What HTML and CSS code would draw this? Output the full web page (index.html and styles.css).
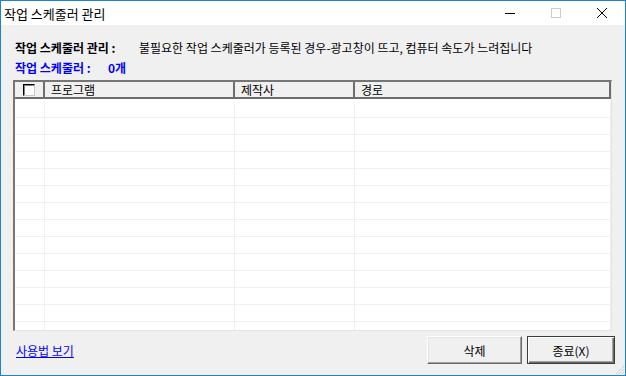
FILE: index.html
```html
<!DOCTYPE html>
<html>
<head>
    <title>작업 스케줄러 관리</title>
    <link rel="stylesheet" href="styles.css">
</head>
<body>
    <div class="window">
        <div class="titlebar">
            <span class="title">작업 스케줄러 관리</span>
            <div class="caption-buttons">
                <div class="caption-btn">
                    <svg width="10" height="10" viewBox="0 0 10 10"><path d="M0 5.5H10" stroke="#000" stroke-width="1"/></svg>
                </div>
                <div class="caption-btn">
                    <svg width="10" height="10" viewBox="0 0 10 10"><rect x="0.5" y="0.5" width="9" height="9" fill="none" stroke="#cccccc" stroke-width="1"/></svg>
                </div>
                <div class="caption-btn">
                    <svg width="10" height="10" viewBox="0 0 10 10"><path d="M0 0L10 10M10 0L0 10" stroke="#000" stroke-width="1"/></svg>
                </div>
            </div>
        </div>

        <div class="client">
            <div class="info">
                <div class="info-row">
                    <span class="info-label">작업 스케줄러 관리 :</span>
                    <span>불필요한 작업 스케줄러가 등록된 경우-광고창이 뜨고, 컴퓨터 속도가 느려집니다</span>
                </div>
                <div class="info-row count">
                    <span class="count-label">작업 스케줄러 :</span>
                    <span id="taskCount">0개</span>
                </div>
            </div>

            <div class="list">
                <div class="list-head">
                    <div class="head-cell check-cell"><span class="checkbox"></span></div>
                    <div class="head-cell">프로그램</div>
                    <div class="head-cell">제작사</div>
                    <div class="head-cell">경로</div>
                </div>
                <div class="list-body" id="listBody"></div>
            </div>

            <div class="footer">
                <a class="help-link" href="#">사용법 보기</a>
                <div class="actions">
                    <button class="btn btn-delete">삭제</button>
                    <button class="btn btn-close btn-default">종료(X)</button>
                </div>
            </div>
        </div>

        <svg class="grip" width="10" height="10" viewBox="0 0 10 10">
            <path d="M9 1L1 9M9 4L4 9M9 7L7 9" stroke="#b8b8b8" stroke-width="1" stroke-dasharray="1 1"/>
        </svg>
    </div>

    <script>
        const listBody = document.getElementById('listBody');
        const totalRows = 14; // empty rows, the list has no tasks

        for (let i = 0; i < totalRows; i++) {
            const row = document.createElement('div');
            row.className = 'list-row';
            for (let c = 0; c < 4; c++) {
                const cell = document.createElement('div');
                cell.className = 'list-cell';
                row.appendChild(cell);
            }
            listBody.appendChild(row);
        }
    </script>
</body>
</html>
```

FILE: styles.css
```css
body {
    margin: 0;
    font-family: "Noto Sans CJK KR", "Noto Sans", sans-serif;
    font-size: 12px;
    color: #000;
}
.window {
    width: 626px;
    height: 376px;
    box-sizing: border-box;
    border: 1px solid #1883d7;
    background-color: #f0f0f0;
    display: flex;
    flex-direction: column;
    position: relative;
}
.titlebar {
    height: 24px;
    background-color: #fff;
    display: flex;
    align-items: center;
}
.title {
    flex: 1;
    padding-left: 3px;
    font-size: 13px;
}
.caption-buttons {
    display: flex;
}
.caption-btn {
    width: 46px;
    height: 24px;
    display: flex;
    align-items: center;
    justify-content: center;
}
.client {
    flex: 1;
    display: flex;
    flex-direction: column;
    padding: 12px 0 0 12px;
}
.info-row {
    display: flex;
    align-items: center;
    height: 20px;
    padding-left: 2px;
}
.info-label {
    width: 124px;
    font-weight: bold;
}
.count {
    color: #0000ff;
    font-weight: bold;
}
.count-label {
    width: 93px;
}
.list {
    margin: 3px 13px 0 0;
    height: 251px;
    box-sizing: border-box;
    border-style: solid;
    border-width: 2px 1px 1px 2px;
    border-color: #767676 #e3e3e3 #e3e3e3 #767676;
    background-color: #fff;
    display: flex;
    flex-direction: column;
    overflow: hidden;
}
.list-head,
.list-row {
    display: grid;
    grid-template-columns: 30px 190px 120px 1fr;
}
.list-head {
    height: 17px;
}
.head-cell {
    box-sizing: border-box;
    border-right: 2px solid #6d6d6d;
    border-bottom: 2px solid #6d6d6d;
    background-color: #f0f0f0;
    padding-left: 6px;
    line-height: 15px;
}
.check-cell {
    padding-left: 0;
    display: flex;
    align-items: center;
    justify-content: center;
}
.checkbox {
    width: 12px;
    height: 12px;
    box-sizing: border-box;
    background-color: #fff;
    border: 1px solid;
    border-color: #000 #c8c8c8 #c8c8c8 #000;
    box-shadow: inset 1px 1px #808080;
    margin-top: 1px;
}
.list-body {
    flex: 1;
    padding-top: 2px;
    overflow: hidden;
}
.list-row {
    height: 17px;
}
.list-cell {
    box-sizing: border-box;
    border-right: 1px solid #f0f0f0;
    border-bottom: 1px solid #f0f0f0;
}
.footer {
    display: flex;
    align-items: center;
    justify-content: space-between;
    height: 28px;
    margin: 5px 10px 0 0;
    padding-left: 3px;
}
.help-link {
    color: #0000ff;
    text-decoration: underline;
}
.actions {
    display: flex;
    gap: 5px;
}
.btn {
    height: 28px;
    box-sizing: border-box;
    font-family: inherit;
    font-size: 12px;
    color: #000;
    background-color: #f0f0f0;
    border: 1px solid;
    border-color: #fff #696969 #696969 #fff;
    box-shadow: inset -1px -1px #a0a0a0, inset 1px 1px #e3e3e3;
    padding: 0;
}
.btn-delete {
    width: 95px;
}
.btn-close {
    width: 88px;
}
.btn-default {
    border-color: #3c3c3c;
    box-shadow: inset 1px 1px #fff, inset -1px -1px #696969, inset -2px -2px #a0a0a0;
}
.grip {
    position: absolute;
    right: 0;
    bottom: 0;
}
```
